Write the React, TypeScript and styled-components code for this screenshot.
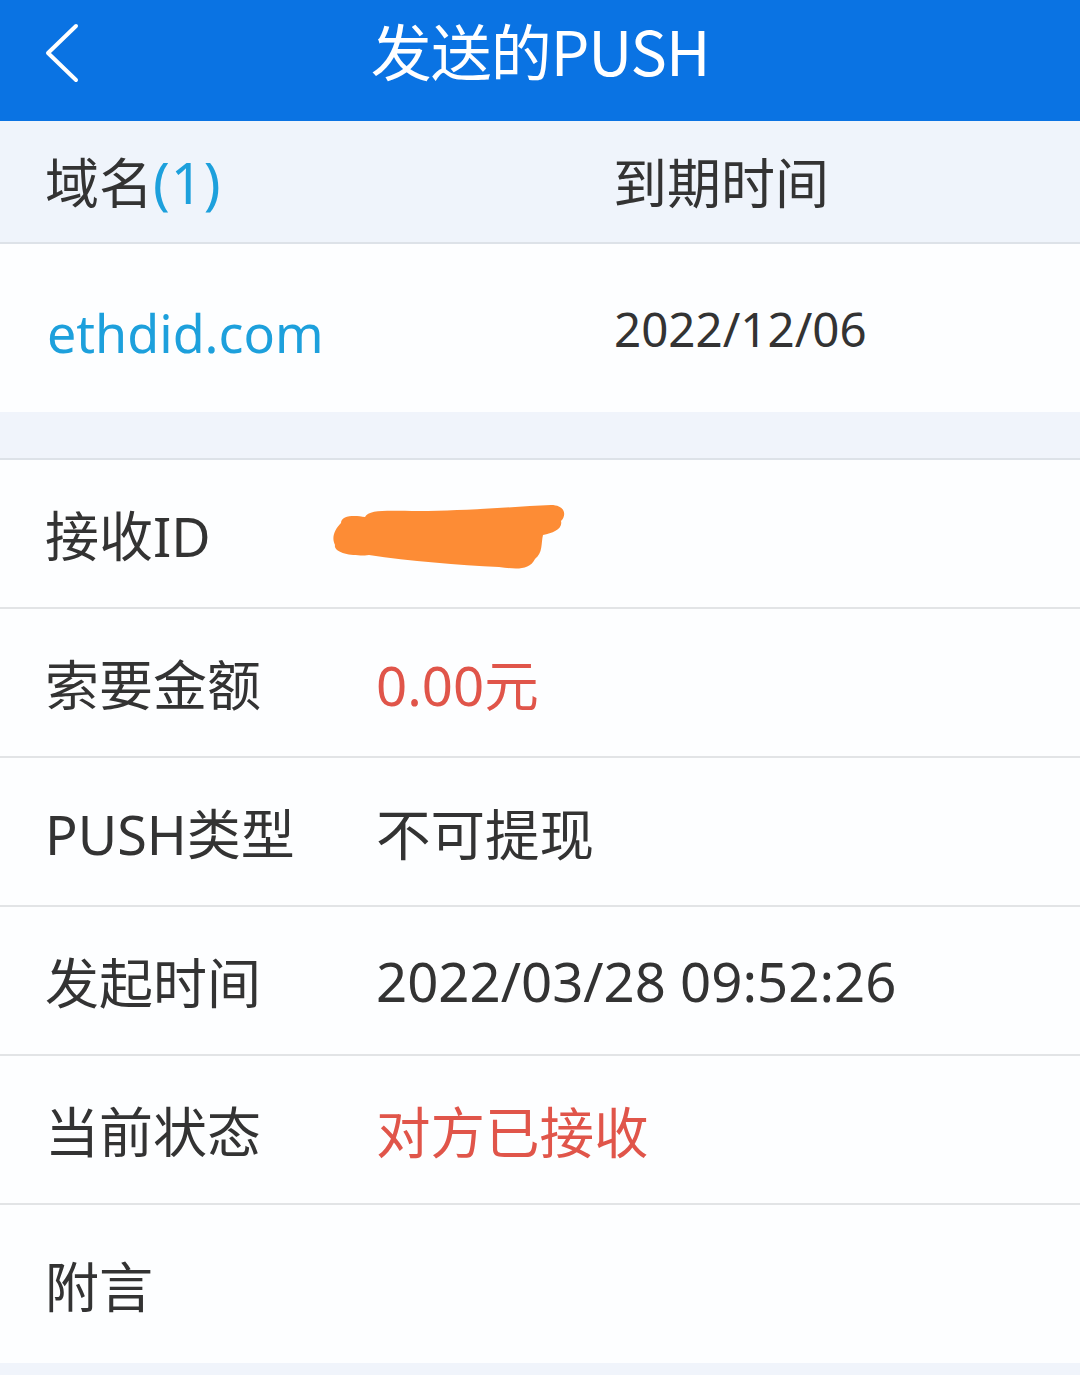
import React from "react";
import styled, { createGlobalStyle } from "styled-components";

const GlobalStyle = createGlobalStyle`
  html, body {
    margin: 0;
    padding: 0;
    background: #ffffff;
    font-family: "Noto Sans", "Noto Sans CJK SC", sans-serif;
  }
`;

const Page = styled.div`
  width: 1080px;
  height: 1375px;
  overflow: hidden;
  background: #f0f4fb;
  display: flex;
  flex-direction: column;
`;

const NavBar = styled.div`
  height: 121px;
  background: #0a73e3;
  display: flex;
  align-items: center;
  justify-content: center;
  position: relative;
  flex-shrink: 0;
`;

const BackBtn = styled.div`
  position: absolute;
  left: 40px;
  top: 22px;
  width: 44px;
  height: 62px;
`;

const Title = styled.div`
  color: #ffffff;
  font-size: 61px;
  font-family: "Noto Sans CJK SC", sans-serif;
  margin-top: -22px;
  letter-spacing: -1px;
`;

const HeadBand = styled.div`
  height: 121px;
  background: #eff4fb;
  border-bottom: 2px solid #dde2e8;
  display: grid;
  grid-template-columns: 568px 1fr;
  align-items: center;
  padding-left: 45px;
  flex-shrink: 0;
`;

const HeadCell = styled.div`
  font-family: "Noto Sans CJK SC", sans-serif;
  font-size: 54px;
  color: #333333;
  margin-top: -2px;
`;

const Count = styled.span`
  color: #1da0dc;
  font-family: "Noto Sans", sans-serif;
  font-size: 56px;
  letter-spacing: 1px;
`;

const DomainRow = styled.div`
  height: 168px;
  background: #fdfeff;
  display: grid;
  grid-template-columns: 567px 1fr;
  align-items: center;
  padding-left: 47px;
  flex-shrink: 0;
`;

const DomainLink = styled.div`
  font-family: "Noto Sans", sans-serif;
  font-size: 52px;
  color: #1da0dc;
  margin-top: 8px;
`;

const DateText = styled.div`
  font-family: "Noto Sans", sans-serif;
  font-size: 47.5px;
  color: #333333;
`;

const Spacer = styled.div`
  height: 46px;
  background: #f0f4fb;
  border-bottom: 2px solid #dde2e8;
  flex-shrink: 0;
`;

const List = styled.div`
  background: #fdfeff;
  display: flex;
  flex-direction: column;
`;

const Row = styled.div<{ $h?: number }>`
  height: ${(p) => p.$h ?? 147}px;
  border-bottom: 2px solid #e2e4e6;
  display: grid;
  grid-template-columns: 331px 1fr;
  align-items: center;
  padding-left: 45px;
  &:last-child {
    border-bottom: none;
  }
`;

const Label = styled.div`
  font-family: "Noto Sans", "Noto Sans CJK SC", sans-serif;
  font-size: 54px;
  color: #333333;
`;

const Value = styled.div<{ $red?: boolean }>`
  font-family: "Noto Sans", "Noto Sans CJK SC", sans-serif;
  font-size: 54.5px;
  color: ${(p) => (p.$red ? "#e0554a" : "#333333")};
`;

const Scribble = styled.svg`
  display: block;
  margin-left: -47px;
  margin-top: 10px;
`;

const rows: { label: string; value: React.ReactNode; red?: boolean }[] = [
  {
    label: "接收ID",
    value: (
      <Scribble width="240" height="76" viewBox="0 0 240 76">
        <path
          d="M12 22 C12 14 26 14 36 16 C40 8 60 10 90 10 C130 10 180 6 222 4 C236 4 238 14 232 20 C234 28 224 32 214 34 C212 42 214 52 206 58 C200 70 186 68 170 66 C130 64 80 60 40 54 C24 56 4 52 6 44 C2 36 6 28 12 22 Z"
          fill="#fd8c35"
        />
      </Scribble>
    ),
  },
  { label: "索要金额", value: "0.00元", red: true },
  { label: "PUSH类型", value: "不可提现" },
  { label: "发起时间", value: "2022/03/28 09:52:26" },
  { label: "当前状态", value: "对方已接收", red: true },
];

export default function App() {
  return (
    <Page>
      <GlobalStyle />
      <NavBar>
        <BackBtn>
          <svg width="44" height="62" viewBox="0 0 44 62">
            <path
              d="M36 4 L8 31 L36 58"
              fill="none"
              stroke="#ffffff"
              strokeWidth="4"
              strokeLinecap="round"
              strokeLinejoin="round"
            />
          </svg>
        </BackBtn>
        <Title>发送的PUSH</Title>
      </NavBar>
      <HeadBand>
        <HeadCell>
          域名<Count>(1)</Count>
        </HeadCell>
        <HeadCell>到期时间</HeadCell>
      </HeadBand>
      <DomainRow>
        <DomainLink>ethdid.com</DomainLink>
        <DateText>2022/12/06</DateText>
      </DomainRow>
      <Spacer />
      <List>
        {rows.map((r) => (
          <Row key={r.label}>
            <Label>{r.label}</Label>
            <Value $red={r.red}>{r.value}</Value>
          </Row>
        ))}
        <Row $h={158}>
          <Label>附言</Label>
          <Value />
        </Row>
      </List>
    </Page>
  );
}
